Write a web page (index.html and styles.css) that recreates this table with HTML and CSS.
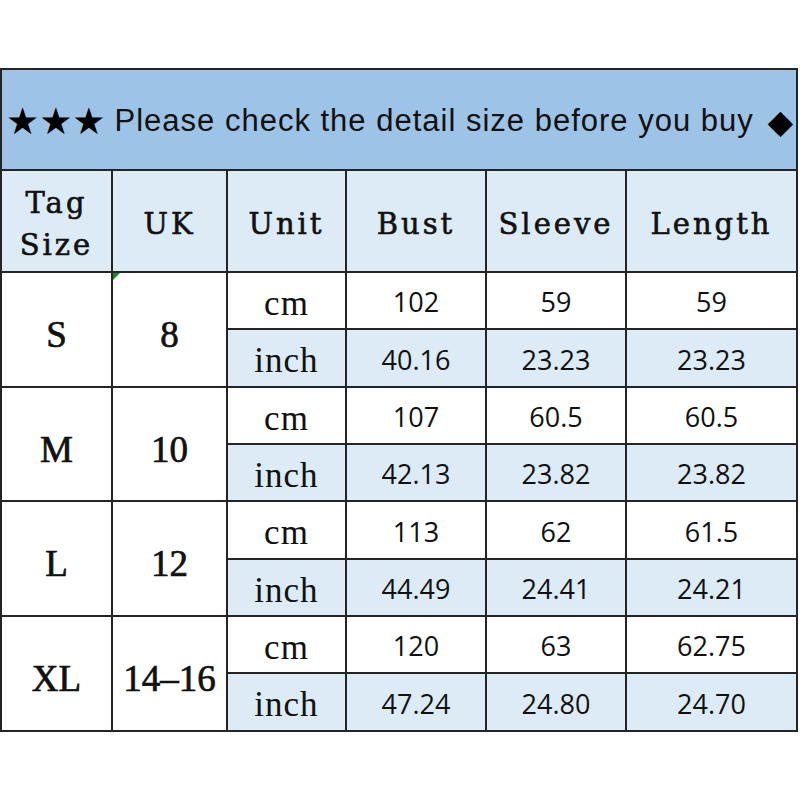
FILE: index.html
```html
<!DOCTYPE html>
<html>
<head>
<meta charset="utf-8">
<link rel="stylesheet" href="styles.css">
</head>
<body>
<div class="sheet">
  <div class="title"><span class="stars">★★★</span><span class="note">Please check the detail size before you buy</span><span class="diamond">◆</span></div>

  <div class="head"><span>Tag<br>Size</span></div>
  <div class="head"><span>UK</span></div>
  <div class="head"><span>Unit</span></div>
  <div class="head"><span>Bust</span></div>
  <div class="head"><span>Sleeve</span></div>
  <div class="head"><span>Length</span></div>

  <div class="size">S</div>
  <div class="size uk flag">8</div>
  <div class="unit">cm</div>
  <div class="num">102</div>
  <div class="num">59</div>
  <div class="num">59</div>
  <div class="unit alt">inch</div>
  <div class="num alt">40.16</div>
  <div class="num alt">23.23</div>
  <div class="num alt">23.23</div>

  <div class="size">M</div>
  <div class="size uk">10</div>
  <div class="unit">cm</div>
  <div class="num">107</div>
  <div class="num">60.5</div>
  <div class="num">60.5</div>
  <div class="unit alt">inch</div>
  <div class="num alt">42.13</div>
  <div class="num alt">23.82</div>
  <div class="num alt">23.82</div>

  <div class="size">L</div>
  <div class="size uk">12</div>
  <div class="unit">cm</div>
  <div class="num">113</div>
  <div class="num">62</div>
  <div class="num">61.5</div>
  <div class="unit alt">inch</div>
  <div class="num alt">44.49</div>
  <div class="num alt">24.41</div>
  <div class="num alt">24.21</div>

  <div class="size">XL</div>
  <div class="size uk">14–16</div>
  <div class="unit">cm</div>
  <div class="num">120</div>
  <div class="num">63</div>
  <div class="num">62.75</div>
  <div class="unit alt">inch</div>
  <div class="num alt">47.24</div>
  <div class="num alt">24.80</div>
  <div class="num alt">24.70</div>
</div>
</body>
</html>
```

FILE: styles.css
```css
html, body {
  margin: 0;
  padding: 0;
  background: #ffffff;
}

.sheet {
  margin-top: 68px;
  width: 794px;
  padding: 2px;
  background: #242424;
  display: grid;
  gap: 2px;
  grid-template-columns: 109px 113px 117px 138px 138px 169px;
  grid-template-rows: 99px 100px 55px 56px 55px 55px 56px 55px 55px 56px;
}

.sheet > div {
  background: #ffffff;
  display: flex;
  align-items: center;
  justify-content: center;
  color: #111111;
}

.title {
  grid-column: 1 / -1;
  background: #9dc3e6 !important;
  justify-content: flex-start !important;
  overflow: hidden;
  white-space: nowrap;
  font-family: "Liberation Sans", Arial, sans-serif;
  font-size: 31px;
  padding-left: 4px;
  padding-top: 3px;
  box-sizing: border-box;
}

.stars {
  font-family: "DejaVu Sans", sans-serif;
  font-size: 37px;
  letter-spacing: 0;
  margin-right: 9px;
  color: #000000;
}

.note {
  letter-spacing: 1px;
}

.diamond {
  font-family: "DejaVu Sans", sans-serif;
  font-size: 33px;
  margin-left: 14px;
  color: #000000;
}

.head {
  background: #ddebf7 !important;
  font-family: "DejaVu Serif", serif;
  font-size: 29px;
  letter-spacing: 3px;
  -webkit-text-stroke: 0.6px #111111;
  line-height: 42px;
  text-align: center;
  padding-top: 6px;
  box-sizing: border-box;
}

.size {
  grid-row: span 2;
  font-family: "Liberation Serif", serif;
  font-size: 37px;
  -webkit-text-stroke: 0.7px #111111;
  padding-top: 10px;
  box-sizing: border-box;
}

.flag {
  position: relative;
}

.flag::before {
  content: "";
  position: absolute;
  left: 0;
  top: 0;
  border-top: 7px solid #1e8a1e;
  border-right: 7px solid transparent;
}

.unit {
  font-family: "Liberation Serif", serif;
  font-size: 35px;
  letter-spacing: 1px;
  padding-top: 6px;
  box-sizing: border-box;
}

.num {
  font-family: "Open Sans", sans-serif;
  font-size: 27px;
  padding-top: 2px;
  box-sizing: border-box;
}

.sheet > .alt {
  background: #ddebf7;
}
```
